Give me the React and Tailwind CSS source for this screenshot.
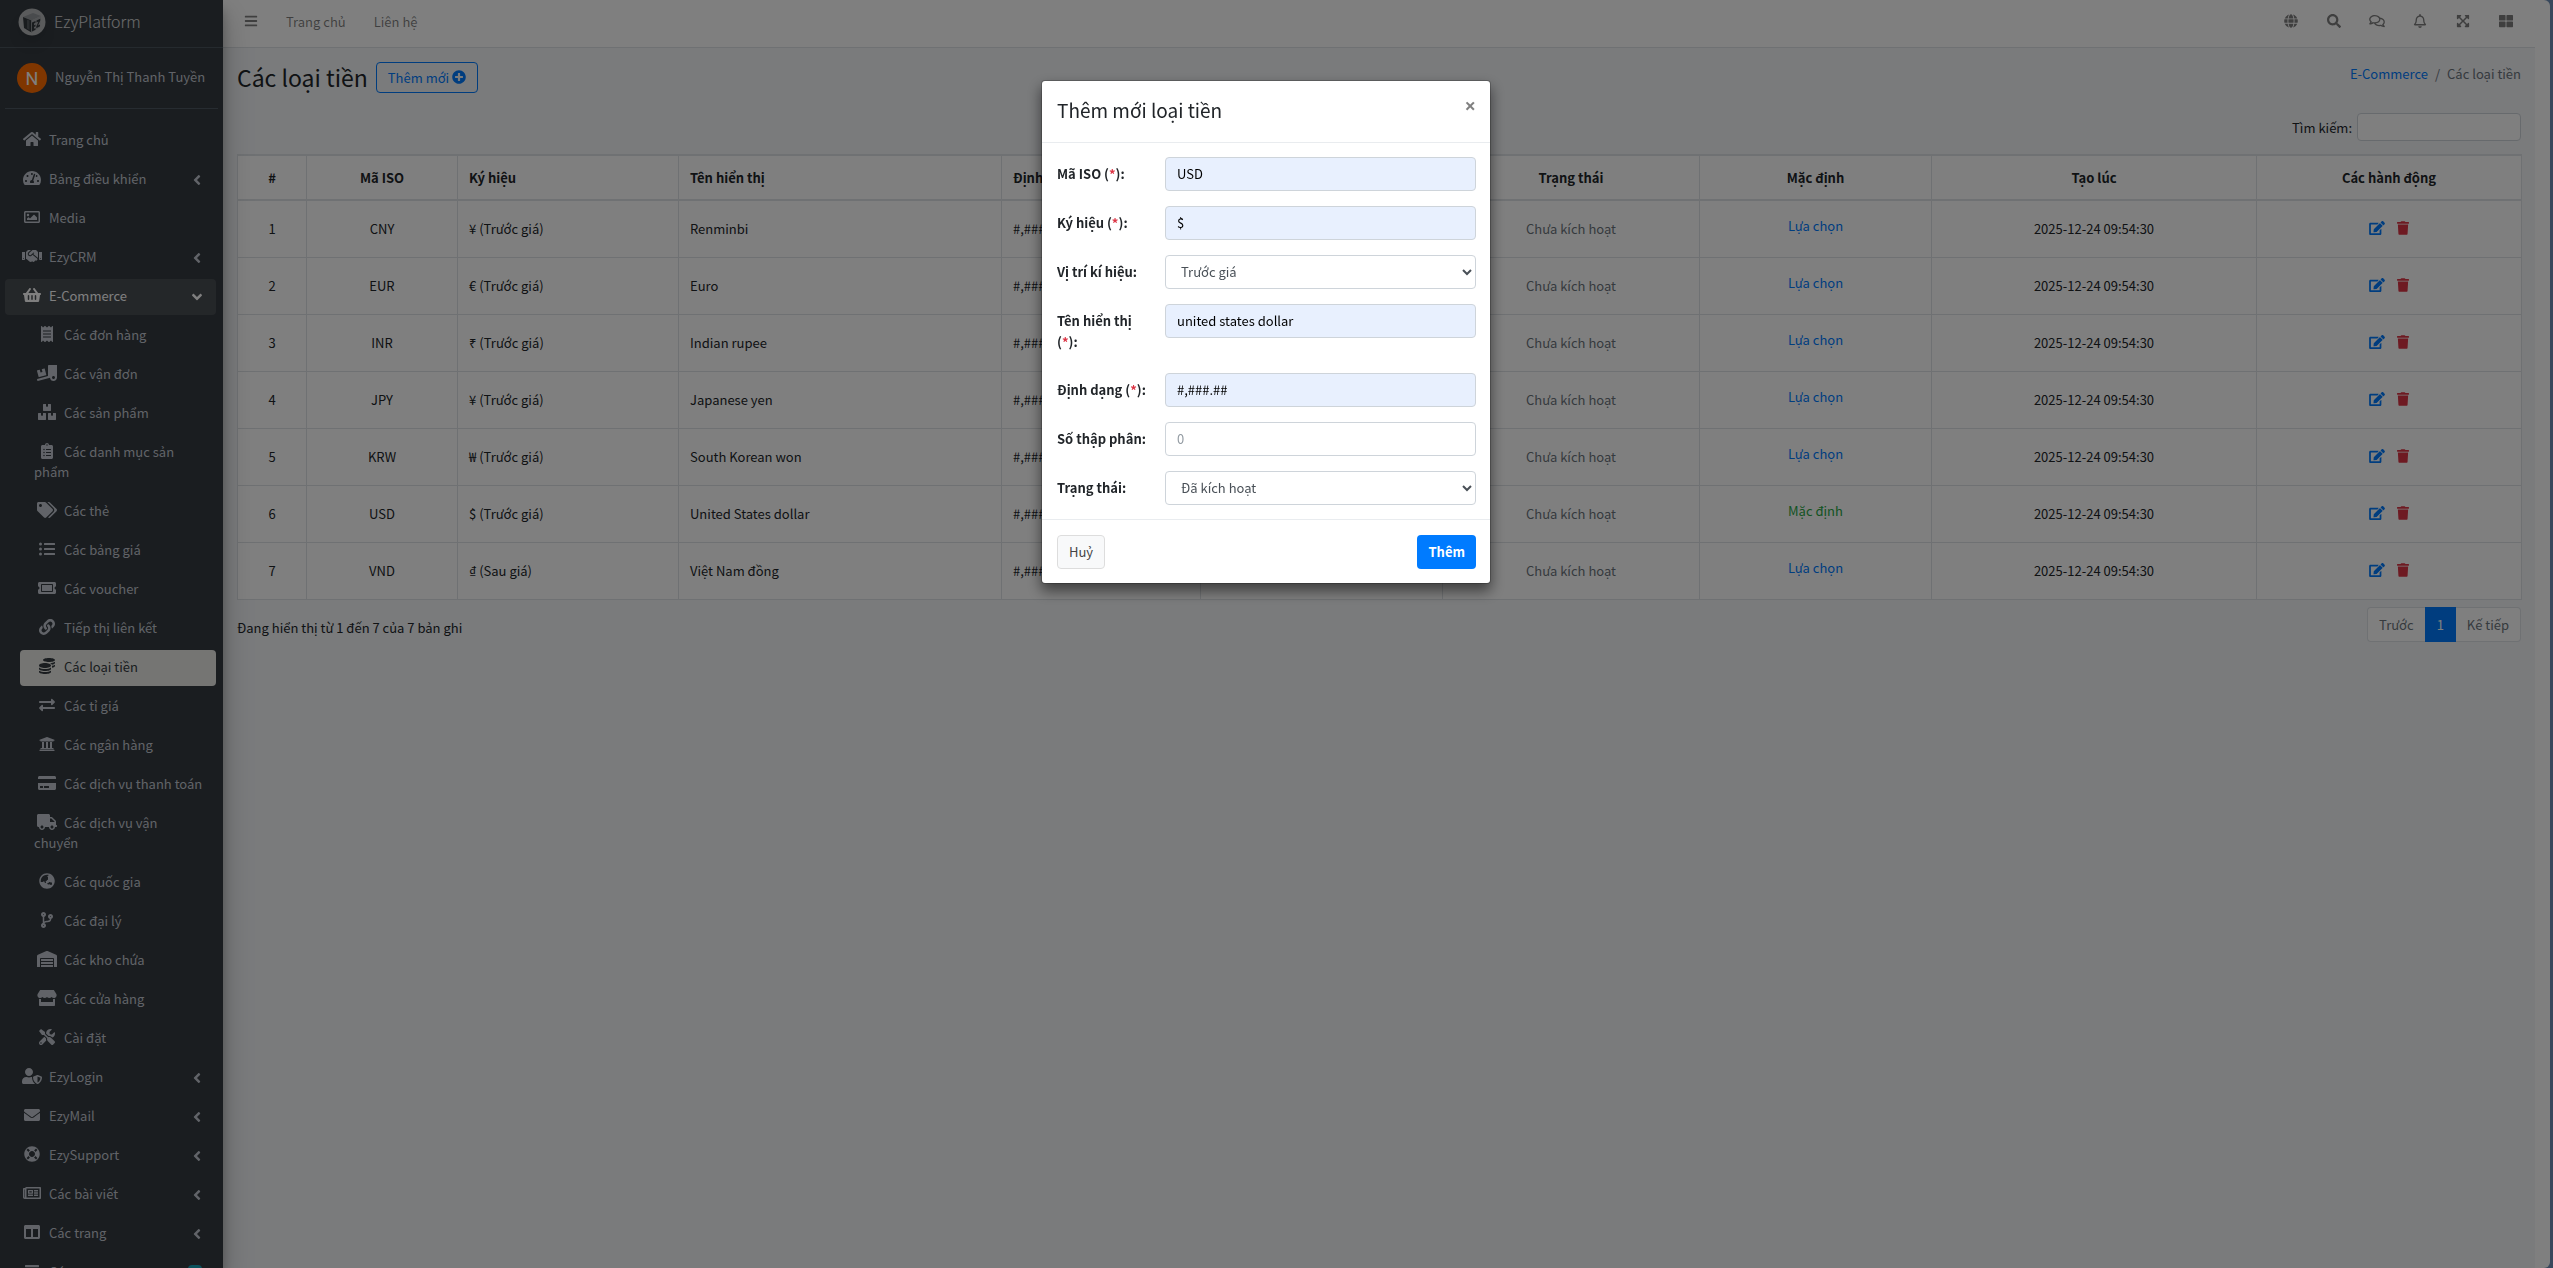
import { useState } from 'react';
import {
  FaAngleLeft, FaBars, FaBoxes, FaClipboardList, FaCodeBranch, FaCoins, FaColumns, FaCreditCard,
  FaEdit, FaEnvelope, FaExchangeAlt, FaExpandArrowsAlt, FaGlobe, FaGlobeAsia, FaHandshake, FaHome,
  FaLifeRing, FaLink, FaListUl, FaPlusCircle, FaReceipt, FaRegBell, FaRegComments, FaRegImage,
  FaRegNewspaper, FaSearch, FaShoppingBasket, FaStore, FaTachometerAlt, FaTags, FaThLarge,
  FaTicketAlt, FaTools, FaTrash, FaTruck, FaTruckLoading, FaUniversity, FaUserShield, FaWarehouse,
} from 'react-icons/fa';

const topLinks = [
  { icon: FaHome, label: 'Trang chủ' },
  { icon: FaTachometerAlt, label: 'Bảng điều khiển', tree: true },
  { icon: FaRegImage, label: 'Media' },
  { icon: FaHandshake, label: 'EzyCRM', tree: true },
  { icon: FaShoppingBasket, label: 'E-Commerce', tree: true, open: true },
];

const shopLinks = [
  { icon: FaReceipt, label: 'Các đơn hàng' },
  { icon: FaTruckLoading, label: 'Các vận đơn' },
  { icon: FaBoxes, label: 'Các sản phẩm' },
  { icon: FaClipboardList, label: 'Các danh mục sản phẩm' },
  { icon: FaTags, label: 'Các thẻ' },
  { icon: FaListUl, label: 'Các bảng giá' },
  { icon: FaTicketAlt, label: 'Các voucher' },
  { icon: FaLink, label: 'Tiếp thị liên kết' },
  { icon: FaCoins, label: 'Các loại tiền', active: true },
  { icon: FaExchangeAlt, label: 'Các tỉ giá' },
  { icon: FaUniversity, label: 'Các ngân hàng' },
  { icon: FaCreditCard, label: 'Các dịch vụ thanh toán' },
  { icon: FaTruck, label: 'Các dịch vụ vận chuyển' },
  { icon: FaGlobeAsia, label: 'Các quốc gia' },
  { icon: FaCodeBranch, label: 'Các đại lý' },
  { icon: FaWarehouse, label: 'Các kho chứa' },
  { icon: FaStore, label: 'Các cửa hàng' },
  { icon: FaTools, label: 'Cài đặt' },
];

const bottomLinks = [
  { icon: FaUserShield, label: 'EzyLogin', tree: true },
  { icon: FaEnvelope, label: 'EzyMail', tree: true },
  { icon: FaLifeRing, label: 'EzySupport', tree: true },
  { icon: FaRegNewspaper, label: 'Các bài viết', tree: true },
  { icon: FaColumns, label: 'Các trang', tree: true },
  { icon: FaBars, label: 'Các menu', badge: '6' },
];

const toolbar = [
  { icon: FaGlobe, label: 'Ngôn ngữ' },
  { icon: FaSearch, label: 'Tìm kiếm' },
  { icon: FaRegComments, label: 'Tin nhắn' },
  { icon: FaRegBell, label: 'Thông báo' },
  { icon: FaExpandArrowsAlt, label: 'Toàn màn hình' },
  { icon: FaThLarge, label: 'Tiện ích' },
];

const columns = [
  { label: '#', width: 'w-[69px]', center: true },
  { label: 'Mã ISO', width: 'w-[151px]', center: true },
  { label: 'Ký hiệu', width: 'w-[221px]' },
  { label: 'Tên hiển thị', width: 'w-[323px]' },
  { label: 'Định dạng', width: 'w-[199px]' },
  { label: 'Số thập phân', width: 'w-[242px]', center: true },
  { label: 'Trạng thái', width: 'w-[257px]', center: true },
  { label: 'Mặc định', width: 'w-[232px]', center: true },
  { label: 'Tạo lúc', width: 'w-[325px]', center: true },
  { label: 'Các hành động', width: 'w-[265px]', center: true },
];

const currencies = [
  { iso: 'CNY', symbol: '¥ (Trước giá)', name: 'Renminbi' },
  { iso: 'EUR', symbol: '€ (Trước giá)', name: 'Euro' },
  { iso: 'INR', symbol: '₹ (Trước giá)', name: 'Indian rupee' },
  { iso: 'JPY', symbol: '¥ (Trước giá)', name: 'Japanese yen' },
  { iso: 'KRW', symbol: '₩ (Trước giá)', name: 'South Korean won' },
  { iso: 'USD', symbol: '$ (Trước giá)', name: 'United States dollar', isDefault: true },
  { iso: 'VND', symbol: '₫ (Sau giá)', name: 'Việt Nam đồng' },
];

function BrandLogo() {
  return (
    <svg className="h-7 w-7 rounded-full shadow-lg" viewBox="0 0 28 28" aria-hidden="true">
      <circle cx="14" cy="14" r="13.5" fill="#b4b6b8" />
      <path d="m5 9 10-4 8 3-9.500 4.500z" fill="#93979a" />
      <path d="m5 9 8.500 3.500v12L6 20z" fill="#33383d" />
      <path d="m9 11.500 2.500 1v9.500L9 20.500z" fill="#555a5f" />
      <path d="m13.500 12.500 9.500-4.500-1 11.500-8.500 5z" fill="#a4a7aa" />
      <path d="m14 14.500 3.500-1.600v1.800L16 15.500v1.700l1.500-.7v1.700l-1.500.7v1.800l1.500-.8v1.800L14 23.500z" fill="#33383d" />
      <path d="m18.500 12.500 3.800-1.800-.1 2-2.200 4.800 2-1v1.800l-3.700 2v-1.900l2.200-4.900-2 .9z" fill="#33383d" />
    </svg>
  );
}

function NavItem({ item, child }) {
  const Icon = item.icon;
  let tone = 'text-[#c2c7d0]';
  if (item.open) tone = 'bg-[#494e53] text-white';
  if (item.active) tone = 'bg-[#eaebe6] text-[#343a40]';

  return (
    <li className={child ? 'pl-[15px]' : ''}>
      <a className={`relative block rounded pt-[7px] pr-3 pb-[9px] pl-[14px] leading-5 ${tone}`} href="#">
        <span className="mr-1 inline-flex h-4 w-[26px] justify-center align-[-2px]">
          <Icon className="h-4 w-5" />
        </span>
        <span>{item.label}</span>
        {item.tree && (
          <FaAngleLeft className={`absolute top-[10px] right-[13px] h-4 w-3 ${item.open ? '-rotate-90' : ''}`} />
        )}
        {item.badge && (
          <span className="absolute top-[10px] right-[14px] rounded bg-[#17a2b8] px-1 text-[10px] leading-4 font-bold text-white">
            {item.badge}
          </span>
        )}
      </a>
    </li>
  );
}

function Sidebar() {
  return (
    <aside className="relative z-10 w-[223px] shrink-0 bg-[#343a40] text-[#c2c7d0] shadow-[0_14px_28px_rgba(0,0,0,.25),0_10px_10px_rgba(0,0,0,.22)]">
      <a className="flex h-12 items-center gap-2 border-b border-[#4b545c] pb-1 pl-[18px] text-[16px] font-light text-white/80" href="#">
        <BrandLogo />
        EzyPlatform
      </a>
      <div className="px-[5px]">
        <div className="flex h-[61px] items-center gap-2 border-b border-[#4f5962] pl-3">
          <span className="flex h-[30px] w-[30px] items-center justify-center rounded-full bg-[#ff6d00] font-[Roboto] text-[18px] text-white">
            N
          </span>
          <a className="pb-1 whitespace-nowrap" href="#">Nguyễn Thị Thanh Tuyền</a>
        </div>
        <ul className="mt-[14px] flex w-[211px] flex-col gap-[3px]">
          {topLinks.map((item) => <NavItem item={item} key={item.label} />)}
          {shopLinks.map((item) => <NavItem child item={item} key={item.label} />)}
          {bottomLinks.map((item) => <NavItem item={item} key={item.label} />)}
        </ul>
      </div>
    </aside>
  );
}

function Topbar() {
  return (
    <header className="flex h-12 items-center justify-between border-b border-[#dee2e6] bg-white pr-[21px] pb-[5px] pl-[21px] text-black/50">
      <nav className="flex items-center">
        <button aria-label="Menu" type="button"><FaBars className="h-[14px] w-[14px]" /></button>
        <a className="ml-[28px]" href="#">Trang chủ</a>
        <a className="ml-[28px]" href="#">Liên hệ</a>
      </nav>
      <div className="flex items-center gap-[27px]">
        {toolbar.map(({ icon: Icon, label }) => (
          <button aria-label={label} key={label} type="button">
            <Icon className="h-[14px] w-4" />
          </button>
        ))}
      </div>
    </header>
  );
}

function CurrencyTable() {
  return (
    <table className="mt-[13px] w-full table-fixed border-collapse border border-[#dee2e6] bg-white">
      <thead>
        <tr className="h-[45px] border-y-2 border-[#dee2e6]">
          {columns.map((col) => (
            <th
              className={`border-x border-[#dee2e6] px-[11px] pb-px font-bold ${col.width} ${col.center ? 'text-center' : 'text-left'}`}
              key={col.label}
            >
              {col.label}
            </th>
          ))}
        </tr>
      </thead>
      <tbody className="[&_td]:border [&_td]:border-[#dee2e6] [&_td]:px-[11px] [&_td]:pb-px">
        {currencies.map((row, index) => (
          <tr className="h-[57px]" key={row.iso}>
            <td className="text-center">{index + 1}</td>
            <td className="text-center">{row.iso}</td>
            <td>{row.symbol}</td>
            <td>{row.name}</td>
            <td>#,###.##</td>
            <td className="text-center">0</td>
            <td className="text-center text-[#6c757d]">Chưa kích hoạt</td>
            <td className="text-center">
              <div className="pb-[5px]">
                {row.isDefault
                  ? <span className="text-[#28a745]">Mặc định</span>
                  : <button className="text-[#007bff]" type="button">Lựa chọn</button>}
              </div>
            </td>
            <td className="text-center">2025-12-24 09:54:30</td>
            <td>
              <div className="flex items-center justify-center gap-3">
                <button aria-label="Sửa" className="text-[#007bff]" type="button"><FaEdit className="h-[14px] w-4" /></button>
                <button aria-label="Xoá" className="text-[#dc3545]" type="button"><FaTrash className="h-[14px] w-3" /></button>
              </div>
            </td>
          </tr>
        ))}
      </tbody>
    </table>
  );
}

function Field({ id, label, required, children }) {
  return (
    <div className="grid grid-cols-[93px_1fr] gap-[15px]">
      <label className="py-[6px] font-bold" htmlFor={id}>
        {label}
        {required && <> (<span className="text-[#dc3545]">*</span>)</>}:
      </label>
      {children}
    </div>
  );
}

const control = 'h-[34px] w-full rounded border border-[#ced4da] px-[11px] pb-[2px]';
const filled = `${control} bg-[#e8f0fe] text-black`;

function CurrencyModal({ onClose }) {
  return (
    <div className="fixed inset-0 z-20 flex items-start justify-center bg-black/50 pt-20 pr-[21px]">
      <div
        aria-labelledby="modal-title"
        className="w-[450px] rounded border border-black/20 bg-white bg-clip-padding text-[#212529] shadow-[0_7px_14px_rgba(0,0,0,.5)]"
        role="dialog"
      >
        <div className="flex h-[62px] items-start justify-between border-b border-[#e9ecef] pt-[13px] pr-[14px] pl-[15px]">
          <h4 className="text-[19px] leading-8" id="modal-title">Thêm mới loại tiền</h4>
          <button
            aria-label="Đóng"
            className="font-['Open_Sans'] text-[20px] leading-6 font-bold text-black/50"
            onClick={onClose}
            type="button"
          >
            ×
          </button>
        </div>
        <form className="flex flex-col gap-[15px] py-[14px] pr-[14px] pl-[15px]" id="currency-form">
          <Field id="iso" label="Mã ISO" required><input className={filled} defaultValue="USD" id="iso" /></Field>
          <Field id="symbol" label="Ký hiệu" required><input className={filled} defaultValue="$" id="symbol" /></Field>
          <Field id="position" label="Vị trí kí hiệu">
            <select className={`${control} bg-white text-[#495057]`} id="position"><option>Trước giá</option><option>Sau giá</option></select>
          </Field>
          <Field id="name" label="Tên hiển thị" required><input className={filled} defaultValue="united states dollar" id="name" /></Field>
          <Field id="format" label="Định dạng" required><input className={filled} defaultValue="#,###.##" id="format" /></Field>
          <Field id="decimals" label="Số thập phân"><input className={`${control} bg-white placeholder:text-[#939ba2]`} id="decimals" placeholder="0" /></Field>
          <Field id="status" label="Trạng thái">
            <select className={`${control} bg-white text-[#495057]`} id="status"><option>Đã kích hoạt</option><option>Chưa kích hoạt</option></select>
          </Field>
        </form>
        <div className="flex justify-between border-t border-[#e9ecef] pt-[15px] pr-[14px] pb-[14px] pl-[15px]">
          <button className="h-[34px] rounded border border-[#ddd] bg-[#f8f9fa] px-[11px] pb-[2px] text-[#444]" onClick={onClose} type="button">Huỷ</button>
          <button className="h-[34px] rounded bg-[#007bff] px-[11px] pb-[2px] font-bold text-white" form="currency-form" type="button">Thêm</button>
        </div>
      </div>
    </div>
  );
}

export default function App() {
  const [modalOpen, setModalOpen] = useState(true);

  return (
    <div className="h-screen overflow-hidden bg-[#7090b8] pr-[3px] font-['Noto_Sans_CJK_SC','Noto_Sans',sans-serif] text-[13px] leading-[21px] text-[#212529]">
      <div className="h-full overflow-hidden rounded-r-md bg-[#fefefe] pr-[15px]">
        <div className="flex h-full bg-[#f4f6f9]">
          <Sidebar />
          <div className="min-w-0 flex-1">
            <Topbar />
            <main className="px-[14px] pt-[13px]">
              <div className="flex items-start justify-between">
                <div className="flex items-center gap-2">
                  <h1 className="text-[23px] leading-8">Các loại tiền</h1>
                  <button
                    className="flex h-[31px] items-center gap-[3px] rounded border border-[#007bff] px-[11px] text-[#007bff]"
                    onClick={() => setModalOpen(true)}
                    type="button"
                  >
                    Thêm mới <FaPlusCircle className="h-[14px] w-[14px]" />
                  </button>
                </div>
                <nav className="flex gap-[7px] pt-[2px] text-[#6c757d]">
                  <a className="text-[#007bff]" href="#">E-Commerce</a>
                  <span>/</span>
                  <span>Các loại tiền</span>
                </nav>
              </div>
              <label className="mt-5 flex items-center justify-end gap-[5px]">
                Tìm kiếm:
                <input className="h-7 w-[164px] rounded border border-[#ced4da] bg-white px-2" type="search" />
              </label>
              <CurrencyTable />
              <div className="mt-[7px] flex items-start justify-between">
                <p className="pt-[10px]">Đang hiển thị từ 1 đến 7 của 7 bản ghi</p>
                <div className="flex h-[35px]">
                  <button className="rounded-l border border-r-0 border-[#dee2e6] bg-white px-[11px] text-[#6c757d]" type="button">Trước</button>
                  <button className="bg-[#007bff] px-3 text-white" type="button">1</button>
                  <button className="rounded-r border border-l-0 border-[#dee2e6] bg-white px-[11px] text-[#6c757d]" type="button">Kế tiếp</button>
                </div>
              </div>
            </main>
          </div>
        </div>
      </div>
      {modalOpen && <CurrencyModal onClose={() => setModalOpen(false)} />}
    </div>
  );
}
